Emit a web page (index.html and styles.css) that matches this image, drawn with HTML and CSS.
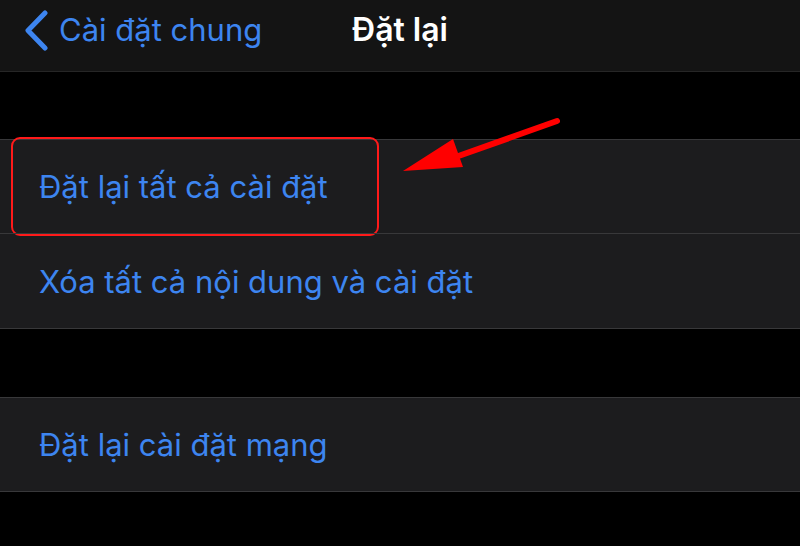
FILE: index.html
```html
<!DOCTYPE html>
<html lang="vi">
<head>
    <meta charset="UTF-8">
    <meta name="viewport" content="width=device-width, initial-scale=1.0">
    <title>Đặt lại</title>
    <link rel="stylesheet" href="styles.css">
</head>
<body>

    <header class="navbar">
        <a class="back" href="#">
            <svg class="chevron" width="26" height="42" viewBox="0 0 26 42">
                <path d="M21 3 L4 20.5 L21 38" fill="none" stroke="#3d85f0" stroke-width="5" stroke-linecap="round" stroke-linejoin="round"/>
            </svg>
            <span>Cài đặt chung</span>
        </a>
        <h1 class="title">Đặt lại</h1>
    </header>

    <section class="group first">
        <div class="row highlighted">
            <span>Đặt lại tất cả cài đặt</span>
            <div class="red-box"></div>
        </div>
        <div class="row">
            <span>Xóa tất cả nội dung và cài đặt</span>
        </div>
        <!-- arrow pointing at the first row -->
        <svg class="arrow" width="170" height="70" viewBox="0 0 170 70">
            <line x1="157" y1="10" x2="50" y2="48" stroke="#ff0000" stroke-width="6" stroke-linecap="round"/>
            <polygon points="3,60 53,28 63,56" fill="#ff0000"/>
        </svg>
    </section>

    <section class="group second">
        <div class="row">
            <span>Đặt lại cài đặt mạng</span>
        </div>
    </section>

</body>
</html>
```

FILE: styles.css
```css
body {
    margin: 0;
    background: #000;
    font-family: Inter, "Noto Sans", sans-serif;
    height: 546px;
    overflow: hidden;
    position: relative;
}
.navbar {
    height: 72px;
    box-sizing: border-box;
    padding-top: 8px;
    background: #141414;
    border-bottom: 1px solid #262626;
    display: flex;
    align-items: flex-start;
    position: relative;
}
.back {
    display: flex;
    align-items: center;
    gap: 9px;
    padding-left: 24px;
    color: #3d85f0;
    text-decoration: none;
    font-size: 31px;
    line-height: 44px;
}
.chevron {
    margin-top: 1px;
}
.title {
    position: absolute;
    top: 8px;
    left: 0;
    right: 0;
    margin: 0;
    text-align: center;
    color: #fff;
    font-size: 32px;
    line-height: 44px;
    font-weight: 600;
    pointer-events: none;
}
.group {
    background: #1c1c1e;
    border-top: 1px solid #38383a;
    border-bottom: 1px solid #38383a;
    position: relative;
}
.group.first {
    margin-top: 67px;
}
.group.second {
    margin-top: 68px;
}
.row {
    height: 93px;
    display: flex;
    align-items: center;
    padding-left: 39px;
    color: #3d85f0;
    font-size: 31px;
    position: relative;
}
.row + .row {
    height: 94px;
    border-top: 1px solid #38383a;
}
.red-box {
    position: absolute;
    left: 11px;
    top: -3px;
    width: 364px;
    height: 95px;
    border: 2px solid #ff1a1a;
    border-radius: 9px;
}
.arrow {
    position: absolute;
    left: 400px;
    top: -29px;
}
```
